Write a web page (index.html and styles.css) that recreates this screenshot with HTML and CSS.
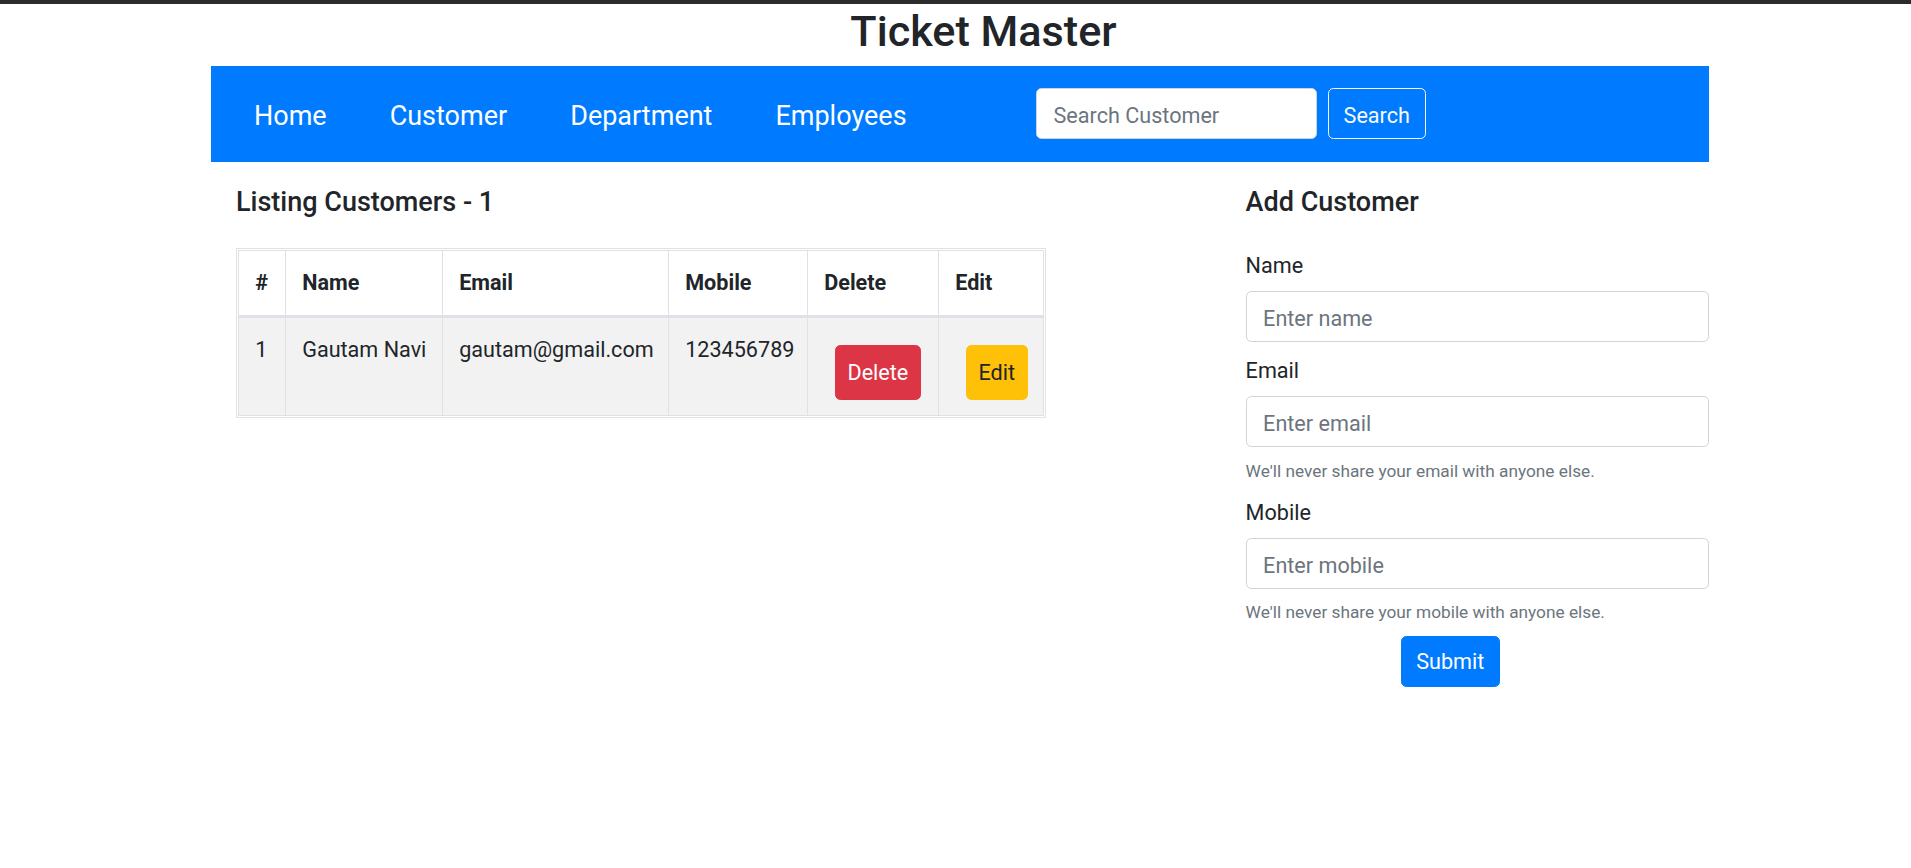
FILE: index.html
```html
<!DOCTYPE html>
<html lang="en">
<head>
<meta charset="utf-8">
<title>Ticket Master</title>
<link rel="stylesheet" href="styles.css">
</head>
<body>
<div class="topbar"></div>
<h2 class="site-title">Ticket Master</h2>
<div class="container">
  <nav class="navbar">
    <ul class="nav-links">
      <li><a href="#">Home</a></li>
      <li><a href="#">Customer</a></li>
      <li><a href="#">Department</a></li>
      <li><a href="#">Employees</a></li>
    </ul>
    <form class="search-form">
      <input class="search-input" type="text" placeholder="Search Customer">
      <button class="btn-outline" type="button">Search</button>
    </form>
  </nav>

  <div class="main">
    <section class="listing">
      <h5 class="section-title">Listing Customers - 1</h5>
      <div class="table-wrap">
        <table class="data-table">
          <thead>
            <tr>
              <th class="c-num">#</th>
              <th class="c-name">Name</th>
              <th class="c-email">Email</th>
              <th class="c-mobile">Mobile</th>
              <th class="c-delete">Delete</th>
              <th class="c-edit">Edit</th>
            </tr>
          </thead>
          <tbody>
            <tr>
              <td>1</td>
              <td>Gautam Navi</td>
              <td>gautam@gmail.com</td>
              <td>123456789</td>
              <td><button class="btn btn-danger" type="button">Delete</button></td>
              <td><button class="btn btn-warning" type="button">Edit</button></td>
            </tr>
          </tbody>
        </table>
      </div>
    </section>

    <section class="add">
      <h5 class="section-title">Add Customer</h5>
      <form class="customer-form">
        <div class="form-group">
          <label class="form-label">Name</label>
          <input class="form-input" type="text" placeholder="Enter name">
        </div>
        <div class="form-group">
          <label class="form-label">Email</label>
          <input class="form-input" type="email" placeholder="Enter email">
          <div class="help"><small>We'll never share your email with anyone else.</small></div>
        </div>
        <div class="form-group">
          <label class="form-label">Mobile</label>
          <input class="form-input" type="text" placeholder="Enter mobile">
          <div class="help"><small>We'll never share your mobile with anyone else.</small></div>
        </div>
        <button class="btn-primary" type="button">Submit</button>
      </form>
    </section>
  </div>
</div>
</body>
</html>
```

FILE: styles.css
```css
* {
  box-sizing: border-box;
}

html, body {
  margin: 0;
  padding: 0;
  background: #fff;
}

body {
  font-family: Roboto, "Liberation Sans", sans-serif;
  font-size: 21.6px;
  line-height: 1.5;
  color: #212529;
}

.topbar {
  height: 4px;
  background: #2c2c2c;
}

.site-title {
  margin: 2px 0 8px;
  padding-left: 56px;
  text-align: center;
  font-size: 43.2px;
  font-weight: 500;
  line-height: 1.2;
  color: #212529;
}

.container {
  margin-left: 211px;
  width: 1498px;
}

/* Navbar */
.navbar {
  display: flex;
  align-items: center;
  height: 96px;
  background: #007bff;
}

.nav-links {
  display: flex;
  gap: 63px;
  flex: 0 0 825px;
  margin: 0;
  padding: 0 0 0 43px;
  list-style: none;
}

.nav-links a {
  display: block;
  padding-top: 5px;
  font-size: 27px;
  line-height: 40px;
  color: #fff;
  text-decoration: none;
}

.search-form {
  display: flex;
  align-items: center;
  gap: 11px;
}

.search-input {
  width: 281px;
  height: 51px;
  padding: 4px 16.5px 0;
  border: 1px solid #ced4da;
  border-radius: 5.4px;
  background: #fff;
  font-family: inherit;
  font-size: 21.6px;
  color: #495057;
}

.search-input::placeholder,
.form-input::placeholder {
  color: #6c757d;
}

.btn-outline {
  height: 51px;
  padding: 4px 14.6px 0;
  border: 1px solid #f8f9fa;
  border-radius: 5.4px;
  background: transparent;
  color: #f8f9fa;
  font-family: inherit;
  font-size: 21.6px;
}

/* Main layout */
.main {
  display: flex;
  justify-content: space-between;
  padding-top: 21.6px;
}

.listing {
  padding-left: 25px;
}

.section-title {
  margin: 0 0 29.4px;
  padding-top: 3px;
  font-size: 27px;
  font-weight: 500;
  line-height: 1.2;
}

/* Table */
.table-wrap {
  display: inline-block;
  border: 1px solid #dee2e6;
  padding: 1px;
}

.data-table {
  border-collapse: separate;
  border-spacing: 0;
  table-layout: fixed;
  width: 806px;
  border-top: 1px solid #dee2e6;
  border-left: 1px solid #dee2e6;
}

.data-table th,
.data-table td {
  box-sizing: border-box;
  border-right: 1px solid #dee2e6;
  border-bottom: 1px solid #dee2e6;
  text-align: left;
  vertical-align: top;
  line-height: 32.4px;
  white-space: nowrap;
}

.data-table th {
  padding: 16px 16.2px 15px;
  font-weight: 700;
  border-bottom-width: 3px;
  background: #fff;
}

.data-table td {
  padding: 16.5px 16.2px 14.5px;
  background: #f2f2f2;
}

.c-num { width: 47px; }
.c-name { width: 157px; }
.c-email { width: 226px; }
.c-mobile { width: 139px; }
.c-delete { width: 131px; }
.c-edit { width: 105px; }

.btn {
  display: inline-block;
  margin: 10.5px 0 0 10.5px;
  padding: 11.5px 11.8px 9.5px;
  border: 1px solid transparent;
  border-radius: 5.4px;
  font-family: inherit;
  font-size: 21.6px;
  line-height: 32.4px;
  vertical-align: top;
}

.btn-danger {
  background: #dc3545;
  border-color: #dc3545;
  color: #fff;
}

.btn-warning {
  background: #ffc107;
  border-color: #ffc107;
  color: #212529;
}

/* Form */
.add {
  width: 463.4px;
}

.form-group {
  margin-bottom: 10.8px;
}

.form-label {
  display: block;
  margin-bottom: 8.7px;
  padding-top: 2px;
  line-height: 32.4px;
}

.form-input {
  display: block;
  width: 100%;
  height: 51px;
  padding: 4px 16.5px 0;
  border: 1px solid #ced4da;
  border-radius: 5.4px;
  background: #fff;
  font-family: inherit;
  font-size: 21.6px;
  color: #495057;
}

.help {
  margin-top: 8.5px;
  line-height: 28px;
  height: 28px;
}

.help small {
  font-size: 17.28px;
  color: #6c757d;
}

.btn-primary {
  display: block;
  margin: 0 0 0 155px;
  height: 51px;
  padding: 0 14.6px;
  border: 1px solid #007bff;
  border-radius: 5.4px;
  background: #007bff;
  color: #fff;
  font-family: inherit;
  font-size: 21.6px;
}
```
